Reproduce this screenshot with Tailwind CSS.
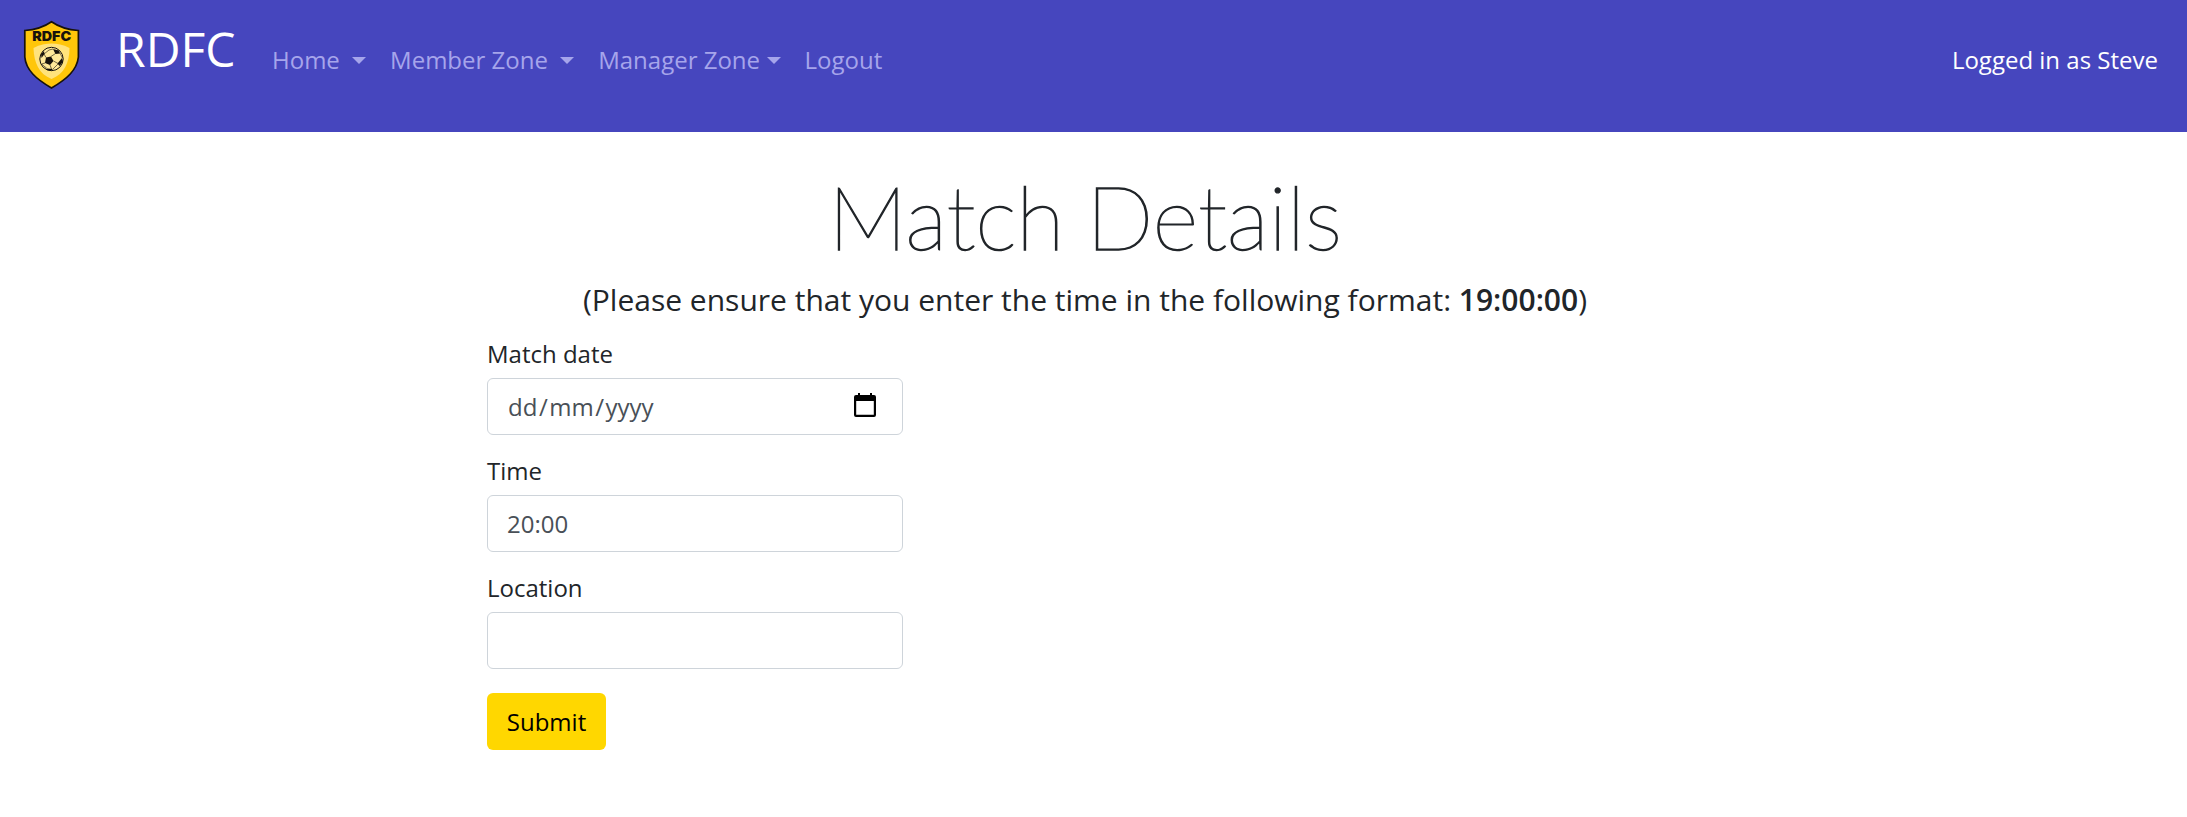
<!DOCTYPE html>
<html lang="en">
<head>
<meta charset="utf-8">
<title>RDFC - Match Details</title>
<script src="https://cdn.jsdelivr.net/npm/@tailwindcss/browser@4"></script>
</head>
<body class="bg-white font-['Open_Sans',sans-serif] text-[24px] leading-[36px] text-[#212529] overflow-hidden">
<nav class="h-[132px] bg-[#4646be] flex items-start pl-[22px] pr-[29px] whitespace-nowrap">
  <svg class="mt-[20px] w-[59px] h-[70px] shrink-0" viewBox="0 0 59 70">
    <path d="M29.5 1.8C22 7 11.500 10 2.800 10.500V37C4 50 14 59 29.500 68C45 59 55 50 56.400 37V10.500C47.500 10 37 7 29.500 1.800Z" fill="#ffc60a" stroke="#17120c" stroke-width="1.700"/>
    <path d="M11.500 28C18 24.500 24 23.500 29.500 23.500C35 23.500 41 24.500 47.500 28C47.500 43 42 54 29.500 59C17 54 12 43 11.500 28Z" fill="#ffe37c"/>
    <text x="29.700" y="21" text-anchor="middle" textLength="39" lengthAdjust="spacingAndGlyphs" font-family="Inter" font-weight="900" font-size="13.500" fill="#17120c">RDFC</text>
    <circle cx="29.500" cy="39" r="11.700" fill="#ffe99a" stroke="#17120c" stroke-width="1"/>
    <path d="M24 37.500L29 36.500L31.500 41L28 45L23 43Z M31 29L37 30.500L38 33.500L33.500 34Z M40 38L41 42L37.500 46L35.500 43.500Z M19 34L22 31L22.500 34L19.500 38Z M25 48.500L31 49L29 51L25 50Z" fill="#17120c"/>
    <path d="M29 36.500L33.500 33.500M31.500 41L36 43.500M28 45L29.500 49M23 43L19.500 44M24 37.500L22 34M22 34L27 30L31 29M38 33L40.500 38M36 44L31 49M19.500 44L25 48.500" fill="none" stroke="#17120c" stroke-width=".6"/>
  </svg>
  <span class="ml-[35px] mt-[13px] text-[48px] leading-[72px] w-[120px] text-white">RDFC</span>
  <div class="flex mt-[42px] ml-[24px] gap-[24px] text-[#a6a5eb]">
    <div class="ml-[12px] flex items-center">Home&nbsp;<i class="ml-[6px] border-x-[7.200px] border-t-[7.200px] border-x-transparent border-t-[#a6a5eb]"></i></div>
    <div class="flex items-center">Member Zone&nbsp;<i class="ml-[6px] border-x-[7.200px] border-t-[7.200px] border-x-transparent border-t-[#a6a5eb]"></i></div>
    <div class="flex items-center">Manager Zone<i class="ml-[6.500px] border-x-[7.200px] border-t-[7.200px] border-x-transparent border-t-[#a6a5eb]"></i></div>
    <div>Logout</div>
  </div>
  <span class="ml-auto mt-[42px] text-white">Logged in as Steve</span>
</nav>
<main class="w-[1196px] ml-[487px]">
  <h1 class="pt-[34px] h-[145px] text-center font-['Lato',sans-serif] font-thin text-[88.500px] tracking-[-0.200px] [word-spacing:-3px] leading-[101px] whitespace-nowrap [-webkit-text-stroke:1.400px_#212529]">Match Details</h1>
  <p class="text-center text-[30px] leading-[45px] whitespace-nowrap">(Please ensure that you enter the time in the following format: <b class="font-semibold">19:00:00</b>)</p>
  <form class="mt-[14px] w-[416px]">
    <div class="mb-[18px]">
      <div class="mb-[6px]">Match date</div>
      <div class="h-[57px] border border-[#ced4da] rounded-[6px] flex items-center justify-between pl-[20px] pr-[26px] text-[#495057]">
        <span class="flex"><span>dd</span><span class="px-[1.500px]">/</span><span>mm</span><span class="px-[1.500px]">/</span><span>yyyy</span></span>
        <svg class="w-[22px] h-[24px] -mt-[4px]" viewBox="0 0 22 24"><path fill="#000" fill-rule="evenodd" d="M4 0H6V2H16V0H18V2H20Q22 2 22 4V22Q22 24 20 24H2Q0 24 0 22V4Q0 2 2 2H4ZM2.200 8V21.800H19.800V8Z"/></svg>
      </div>
    </div>
    <div class="mb-[18px]">
      <div class="mb-[6px]">Time</div>
      <div class="h-[57px] border border-[#ced4da] rounded-[6px] flex items-center pl-[19px] text-[#495057]">20:00</div>
    </div>
    <div class="mb-[24px]">
      <div class="mb-[6px]">Location</div>
      <div class="h-[57px] border border-[#ced4da] rounded-[6px]"></div>
    </div>
    <button type="button" class="block w-[119px] h-[57px] rounded-[6px] bg-[#ffd700] text-black">Submit</button>
  </form>
</main>
</body>
</html>
